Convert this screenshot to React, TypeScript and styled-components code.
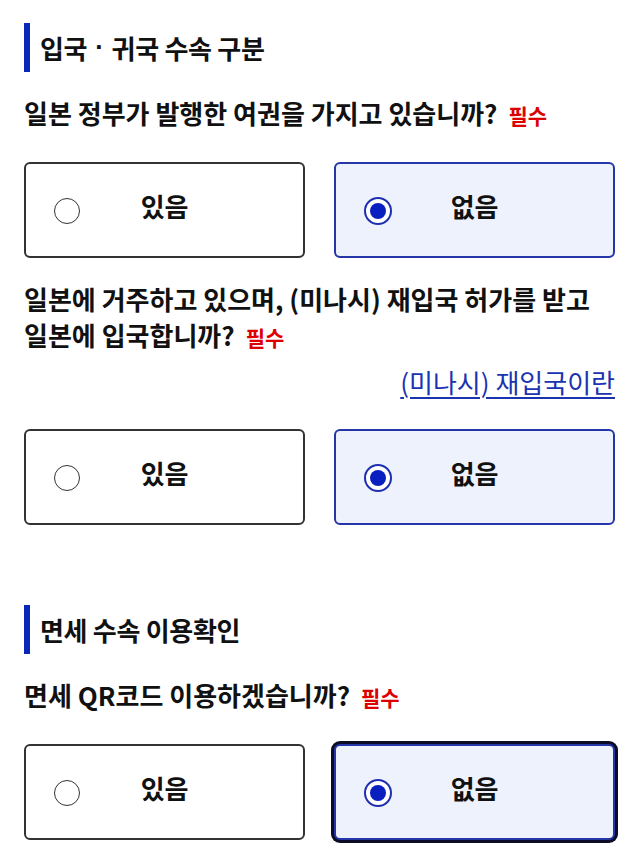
import React, { useState } from "react";
import styled, { createGlobalStyle, css } from "styled-components";

const GlobalStyle = createGlobalStyle`
    body {
        margin: 0;
        background: #ffffff;
        font-family: "Noto Sans CJK KR", "Noto Sans", sans-serif;
        color: #111111;
    }
`;

const Page = styled.main`
    padding: 23px 25px 20px 24px;
    display: flex;
    flex-direction: column;
`;

const Section = styled.section`
    display: flex;
    flex-direction: column;

    & + & {
        margin-top: 80px;
    }
`;

const SectionTitle = styled.h2`
    margin: 0;
    height: 49px;
    display: flex;
    align-items: center;
    border-left: 6px solid #0a28b8;
    padding-left: 10px;
    font-size: 26px;
    font-weight: 600;
    letter-spacing: -0.3px;
    white-space: pre;

    .title__dot {
        font-family: "Liberation Sans", sans-serif;
        margin: 0 8px;
    }
`;

const Question = styled.p`
    margin: 23px 0 0;
    font-size: 26px;
    line-height: 36px;
    font-weight: 700;

    .question__required {
        color: #dd0000;
        font-size: 21px;
        font-weight: 700;
        margin-left: 11px;
    }
`;

const HelpLink = styled.a`
    align-self: flex-end;
    margin-top: 9px;
    font-size: 26px;
    line-height: 36px;
    color: #1a33b0;
    text-decoration: underline;
    text-underline-offset: 4px;
    text-decoration-thickness: 1.5px;
    cursor: pointer;
`;

const Options = styled.div`
    display: grid;
    grid-template-columns: 1fr 1fr;
    gap: 29px;
    margin-top: 29px;
`;

interface OptionCardProps {
    $checked: boolean;
    $focused?: boolean;
}

const OptionCard = styled.label<OptionCardProps>`
    height: 96px;
    box-sizing: border-box;
    border: 2px solid #333333;
    border-radius: 6px;
    background: #ffffff;
    display: grid;
    grid-template-columns: 1fr auto 1fr;
    align-items: center;
    padding: 0 28px;
    cursor: pointer;

    ${({ $checked }) =>
        $checked &&
        css`
            border-color: #2436a8;
            background: #eef2fd;
        `}

    ${({ $focused }) =>
        $focused &&
        css`
            box-shadow: 0 0 0 3px #0c0c26;
        `}

    input {
        position: absolute;
        opacity: 0;
        pointer-events: none;
    }
`;

const RadioMark = styled.span<{ $checked: boolean }>`
    justify-self: start;
    width: 26px;
    height: 26px;
    box-sizing: border-box;
    border-radius: 50%;
    border: 1.5px solid #333333;
    background: #ffffff;
    display: flex;
    align-items: center;
    justify-content: center;
    margin-top: 2px;

    ${({ $checked }) =>
        $checked &&
        css`
            width: 28px;
            height: 28px;
            border: 2px solid #1d2fb0;

            &::after {
                content: "";
                width: 16px;
                height: 16px;
                border-radius: 50%;
                background: #0a1fc0;
            }
        `}
`;

const OptionLabel = styled.span`
    font-size: 26px;
    font-weight: 700;
    letter-spacing: -0.2px;
    margin-bottom: 10px;
`;

interface RadioGroupProps {
    name: string;
    value: string;
    onChange: (v: string) => void;
    focused?: boolean;
}

const RadioGroup = ({ name, value, onChange, focused }: RadioGroupProps) => {
    const items = ["있음", "없음"];
    return (
        <Options role="radiogroup">
            {items.map((item) => {
                const checked = value === item;
                return (
                    <OptionCard
                        key={item}
                        $checked={checked}
                        $focused={focused && checked}
                    >
                        <input
                            type="radio"
                            name={name}
                            checked={checked}
                            onChange={() => onChange(item)}
                        />
                        <RadioMark $checked={checked} />
                        <OptionLabel>{item}</OptionLabel>
                        <span />
                    </OptionCard>
                );
            })}
        </Options>
    );
};

const App = () => {
    const [passport, setPassport] = useState("없음");
    const [reentry, setReentry] = useState("없음");
    const [qrCode, setQrCode] = useState("없음");

    return (
        <>
            <GlobalStyle />
            <Page>
                <Section>
                    <SectionTitle>
                        입국<span className="title__dot">·</span>귀국 수속 구분
                    </SectionTitle>
                    <Question>
                        일본 정부가 발행한 여권을 가지고 있습니까?
                        <span className="question__required">필수</span>
                    </Question>
                    <RadioGroup
                        name="passport"
                        value={passport}
                        onChange={setPassport}
                    />
                    <Question>
                        일본에 거주하고 있으며, (미나시) 재입국 허가를 받고
                        <br />
                        일본에 입국합니까?
                        <span className="question__required">필수</span>
                    </Question>
                    <HelpLink>(미나시) 재입국이란</HelpLink>
                    <RadioGroup
                        name="reentry"
                        value={reentry}
                        onChange={setReentry}
                    />
                </Section>
                <Section>
                    <SectionTitle>면세 수속 이용확인</SectionTitle>
                    <Question>
                        면세 QR코드 이용하겠습니까?
                        <span className="question__required">필수</span>
                    </Question>
                    <RadioGroup
                        name="qrcode"
                        value={qrCode}
                        onChange={setQrCode}
                        focused
                    />
                </Section>
            </Page>
        </>
    );
};

export default App;
